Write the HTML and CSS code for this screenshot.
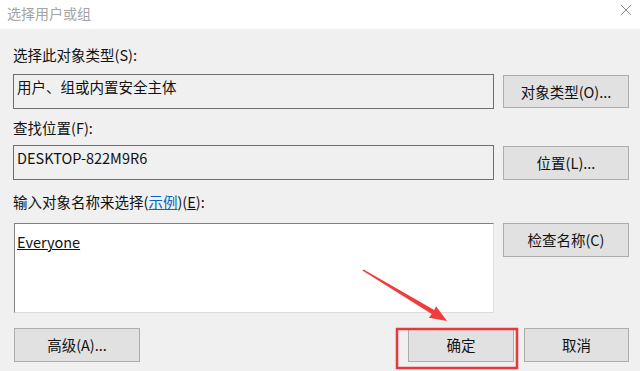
FILE: index.html
```html
<!DOCTYPE html>
<html lang="zh-CN">
<head>
<meta charset="UTF-8" />
<meta name="viewport" content="width=device-width, initial-scale=1.0" />
<title>选择用户或组</title>
<link rel="stylesheet" href="styles.css">
</head>
<body>
<div class="dialog">
  <div class="titlebar">
    <span class="title">选择用户或组</span>
    <svg class="close" width="12" height="12" viewBox="0 0 12 12"><path d="M1 1L11 11M11 1L1 11" stroke="#8a8a8a" stroke-width="1" fill="none"/></svg>
  </div>

  <div class="content">
    <div class="label">选择此对象类型(S):</div>
    <div class="row">
      <div class="field">用户、组或内置安全主体</div>
      <button class="btn btn-a">对象类型(O)...</button>
    </div>

    <div class="label label-2">查找位置(F):</div>
    <div class="row row-2">
      <div class="field">DESKTOP-822M9R6</div>
      <button class="btn btn-b">位置(L)...</button>
    </div>

    <div class="label label-3">输入对象名称来选择(<a class="link">示例</a>)(<u>E</u>):</div>
    <div class="row row-3">
      <div class="names"><u>Everyone</u></div>
      <button class="btn btn-b">检查名称(C)</button>
    </div>

    <div class="actions">
      <button class="btn btn-adv">高级(A)...</button>
      <span class="spacer"></span>
      <button class="btn btn-ok">确定</button>
      <button class="btn btn-cancel">取消</button>
    </div>
  </div>

  <svg class="marks" width="640" height="371" viewBox="0 0 640 371">
    <polygon points="363.6,269.4 434.3,310 436,306.3 447,321 429,317.7 431.7,314 362.4,270.6" fill="#f23c3c"/>
    <rect x="397" y="329" width="120" height="39" fill="none" stroke="#e8393a" stroke-width="2.5"/>
  </svg>
</div>
</body>
</html>
```

FILE: styles.css
```css
* { box-sizing: border-box; margin: 0; padding: 0; }
body { font-family: "Noto Sans CJK SC", "Noto Sans", sans-serif; background: #f0f0f0; color: #111; }
.dialog { position: relative; width: 640px; height: 371px; overflow: hidden; background: #f0f0f0; }

.titlebar { height: 29px; background: #fff; display: flex; align-items: flex-start; justify-content: space-between; padding: 3px 8px 0 7px; }
.title { font-size: 14px; line-height: 20px; color: #a3a3a3; }
.close { margin-top: 1px; }

.content { padding: 0 11px 0 13px; font-size: 14.5px; }
.label { margin-top: 16px; height: 20px; line-height: 20px; }
.label-2 { margin-top: 9px; }
.label-3 { margin-top: 12px; }
.link { color: #0a64c2; text-decoration: underline; }

.row { margin-top: 9px; display: flex; gap: 9px; align-items: center; }
.row-2 { margin-top: 7px; }
.row-3 { margin-top: 11px; align-items: flex-start; }

.field { width: 481px; height: 35px; flex: none; border: 1px solid #6e6e6e; background: #f0f0f0; padding: 2px 3px; line-height: 20px; white-space: nowrap; }
.names { width: 480px; height: 90px; flex: none; margin-left: 1px; background: #fff; border: 1px solid #dcdcdc; border-top-color: #828282; border-left-color: #828282; padding: 8px 2px; line-height: 20px; }

.btn { font: inherit; font-size: 14.5px; color: #111; background: #e1e1e1; border: 1px solid #adadad; height: 34px; line-height: 20px; cursor: default; }
.btn-a { width: 126px; height: 33px; }
.btn-b { width: 126px; }

.actions { margin-top: 15px; display: flex; align-items: center; gap: 10px; }
.spacer { flex: 1; }
.btn-adv { width: 126px; margin-left: 1px; }
.btn-ok { width: 106px; }
.btn-cancel { width: 105px; }

.marks { position: absolute; left: 0; top: 0; pointer-events: none; }
```
